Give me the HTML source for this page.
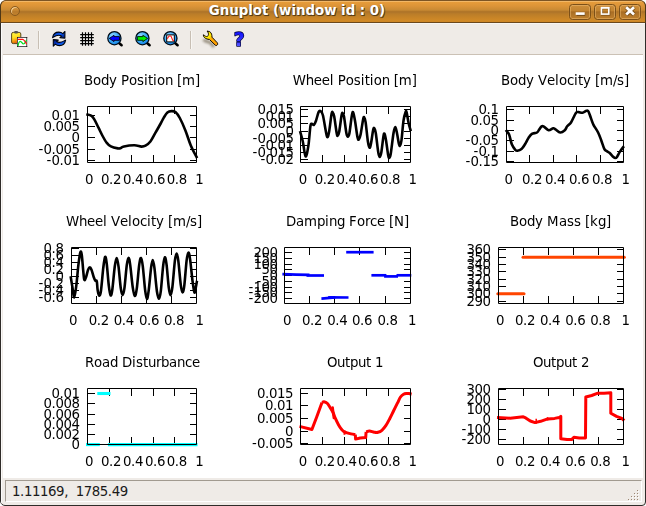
<!DOCTYPE html>
<html><head><meta charset="utf-8"><title>Gnuplot (window id : 0)</title>
<style>
html,body{margin:0;padding:0;background:#fff;}
body{width:646px;height:506px;position:relative;overflow:hidden;font-family:"DejaVu Sans","Liberation Sans",sans-serif;}
#win{position:absolute;left:0;top:0;width:644px;height:504px;background:#efebe7;border:1px solid #2f2c29;border-radius:7px 7px 4px 5px;overflow:hidden;}
#hl{position:absolute;left:0;top:22px;width:644px;height:482px;border-left:1px solid #fbfaf9;border-top:1px solid #f7f5f3;box-sizing:border-box;}
#tb{position:absolute;left:0;top:0;width:646px;height:23px;box-sizing:border-box;border-top:1px solid #7d5524;border-bottom:1px solid #6b481c;border-left:1px solid #4e3716;border-right:1px solid #4e3716;border-radius:6px 6px 0 0;
 background:linear-gradient(to bottom,#f2b766 0px,#f2b766 1px,#e79c3a 1px,#dc9438 5px,#c98a33 9px,#b17629 10.5px,#b17629 11.5px,#bb7d29 13px,#c98527 17px,#d18a27 20px,#cc8424 21px);}
#ttl{position:absolute;left:0;top:2px;width:592px;text-align:center;font-weight:bold;font-size:13.33px;line-height:16px;color:#fff;text-shadow:1px 1px 0 #5a3c14,0 1px 1px #6b481c;white-space:pre;}
.wb{position:absolute;top:3px;width:22px;height:16px;border:1px solid #7c5018;border-radius:3.5px;box-sizing:border-box;
 background:linear-gradient(to bottom,#cd8e3b 0,#c38430 40%,#a86d24 50%,#ad7227 60%,#bf802c 100%);box-shadow:inset 0 0 0 1px rgba(240,190,115,.5), 0 0 0 .5px rgba(240,180,100,.25);}
#circ{position:absolute;left:9px;top:5px;width:8px;height:8px;border-radius:50%;border:1px solid #8a5a1e;box-shadow:inset 1px 1px 0 rgba(255,225,170,.8);background:rgba(200,135,50,.4)}
#plot{position:absolute;left:2px;top:54px;width:640px;height:423px;background:#fff;}
#sb{position:absolute;left:4px;top:479px;width:635px;height:20px;border-top:1px solid #a19a90;border-left:1px solid #a19a90;border-bottom:1px solid #fff;border-right:1px solid #fff;}
#sbt{position:absolute;left:11px;top:483px;font-size:13.33px;line-height:16px;color:#1a1a1a;white-space:pre;letter-spacing:-0.42px;}
.sep{position:absolute;top:30px;width:1px;height:18px;background:#c8bfb4;border-right:1px solid #f8f6f3;}
svg{position:absolute;overflow:visible}
#psvg{will-change:transform}
#psvg text{font-family:"DejaVu Sans","Liberation Sans",sans-serif;font-size:13.33px;fill:#000;}
</style></head><body>
<div id="win">
 <div id="hl"></div>
 <div id="plot"></div>
 <div style="position:absolute;left:2px;top:53px;width:640px;height:1px;background:#cbc1b5"></div>
 <div class="sep" style="left:37px"></div>
 <div class="sep" style="left:189px"></div>
 <div id="sb"></div>
 <div id="sbt">1.11169,  1785.49</div>
 <svg id="icons" width="260" height="32" viewBox="0 24 260 32" style="left:-1px;top:23px;will-change:transform">
<defs>
 <linearGradient id="gclip" x1="0.35" y1="0" x2="0.65" y2="1"><stop offset="0" stop-color="#fff040"/><stop offset=".38" stop-color="#ffe222"/><stop offset=".66" stop-color="#f8a010"/><stop offset="1" stop-color="#d44606"/></linearGradient>
 <linearGradient id="garr" x1="0" y1="0" x2="1" y2="1"><stop offset="0" stop-color="#001a70"/><stop offset=".5" stop-color="#0a5cff"/><stop offset="1" stop-color="#000c58"/></linearGradient>
 <linearGradient id="garr2" x1="0" y1="0" x2="1" y2="1"><stop offset="0" stop-color="#10a8ff"/><stop offset=".45" stop-color="#0a48e8"/><stop offset="1" stop-color="#000c58"/></linearGradient>
 <radialGradient id="glens" cx=".35" cy=".3" r=".8"><stop offset="0" stop-color="#8ed6ff"/><stop offset=".55" stop-color="#38a8f8"/><stop offset="1" stop-color="#0a7ae0"/></radialGradient>
 <linearGradient id="gwr" x1="0" y1="0" x2="1" y2="1"><stop offset="0" stop-color="#f6f000"/><stop offset=".4" stop-color="#ffe800"/><stop offset=".55" stop-color="#ffa800"/><stop offset="1" stop-color="#ff9a00"/></linearGradient>
 <linearGradient id="gq" x1="0" y1="0" x2="0" y2="1"><stop offset="0" stop-color="#0000f8"/><stop offset=".6" stop-color="#3a3aff"/><stop offset="1" stop-color="#7a7aff"/></linearGradient>
 <filter id="blur1" x="-30%" y="-30%" width="160%" height="160%"><feGaussianBlur stdDeviation="0.8"/></filter>
</defs>
<!-- 1: clipboard / copy plot -->
<g>
 <rect x="11.6" y="32.4" width="9.2" height="11.2" rx="1.6" fill="url(#gclip)" stroke="#5c4a1c" stroke-width="1"/>
 <rect x="14.2" y="30.9" width="3.8" height="2.7" rx="1" fill="#555"/>
 <rect x="17.5" y="37.5" width="9.2" height="9" fill="#fff" stroke="#555" stroke-width="1"/>
 <path d="M18 46 C18.4 43.5 19 41.4 20.3 41.3 C21.8 41.3 22 44 23.4 44 C24.8 44 25.6 41.5 26.6 40" fill="none" stroke="#00e020" stroke-width="1.2"/>
 <path d="M17.8 39.4 H22.6 C24.3 39.6 25.5 42 26.6 44.2" fill="none" stroke="#ff1010" stroke-width="1.2"/>
 <rect x="17" y="37" width="1" height="1" fill="#222"/><rect x="26.2" y="37" width="1" height="1" fill="#222"/><rect x="17" y="46" width="1" height="1" fill="#222"/><rect x="26.2" y="46" width="1" height="1" fill="#222"/>
</g>
<!-- 2: replot (refresh arrows) -->
<g transform="translate(52,31)">
 <path d="M0.6 6.6 C1.2 3 3.8 1.1 6.8 1.1 C8.4 1.1 9.8 1.6 10.9 2.6 L12.9 0.5 L12.9 7.1 L7.9 6.6 L9.6 5.2 C8.8 4.6 7.9 4.3 6.8 4.3 C4.4 4.3 2.6 5.4 0.6 6.6 Z" fill="url(#garr)" stroke="#000410" stroke-width="1.1" stroke-linejoin="round"/>
 <path d="M0.6 6.6 C1.2 3 3.8 1.1 6.8 1.1 C8.4 1.1 9.8 1.6 10.9 2.6 L12.9 0.5 L12.9 7.1 L7.9 6.6 L9.6 5.2 C8.8 4.6 7.9 4.3 6.8 4.3 C4.4 4.3 2.6 5.4 0.6 6.6 Z" transform="rotate(180 7.1 7.85)" fill="url(#garr2)" stroke="#000410" stroke-width="1.1" stroke-linejoin="round"/>
</g>
<!-- 3: grid -->
<g>
 <path d="M82.5 32v14M85.5 32v14M88.5 32v14M91.5 32v14M80 34.5h14M80 37.5h14M80 40.5h14M80 43.5h14" stroke="#fff" stroke-width="2.6" opacity=".55" fill="none"/>
 <rect x="83" y="35" width="8" height="8" fill="#fff"/>
 <path d="M82.5 32.2v13.6M85.5 32.2v13.6M88.5 32.2v13.6M91.5 32.2v13.6M80.2 34.5h13.6M80.2 37.5h13.6M80.2 40.5h13.6M80.2 43.5h13.6" stroke="#000" stroke-width="1.25" fill="none"/>
</g>
<!-- 4: zoom previous -->
<g>
 <path d="M119 43 L121.6 45.2" stroke="#000" stroke-width="2.6" stroke-linecap="round"/>
 <circle cx="114.4" cy="38.2" r="6.6" fill="url(#glens)" stroke="#000c18" stroke-width="1.3"/>
 <path d="M109.3 38.4 L114 35.3 V36.6 H119.5 V40.3 H114 V41.6 Z" fill="#0000ff" stroke="#000018" stroke-width=".9" stroke-linejoin="miter"/>
</g>
<!-- 5: zoom next -->
<g>
 <path d="M147 43 L149.6 45.2" stroke="#000" stroke-width="2.6" stroke-linecap="round"/>
 <circle cx="142.4" cy="38.2" r="6.6" fill="url(#glens)" stroke="#000c18" stroke-width="1.3"/>
 <path d="M147.6 38.4 L142.9 35.3 V36.6 H137.4 V40.3 H142.9 V41.6 Z" fill="#00f000" stroke="#001800" stroke-width=".9" stroke-linejoin="miter"/>
</g>
<!-- 6: autoscale -->
<g>
 <path d="M175 43 L177.6 45.2" stroke="#000" stroke-width="2.6" stroke-linecap="round"/>
 <circle cx="170.4" cy="38.2" r="6.6" fill="url(#glens)" stroke="#000c18" stroke-width="1.3"/>
 <rect x="166.7" y="34.9" width="7.6" height="7" fill="#fff" stroke="#000" stroke-width="1"/>
 <path d="M167.3 38.6 C168.2 38 168.4 36.1 169.5 36 H170.6 C171.8 36.2 172 40 173 40.5 L173.9 40.8" fill="none" stroke="#ff1010" stroke-width="1.1"/>
</g>
<!-- 7: wrench -->
<g>
 <path d="M203.5 39.5 C205 41.5 208 42 210 42.4 L214 47" stroke="#7a705c" stroke-width="3" fill="none" opacity=".7" filter="url(#blur1)"/>
 <path d="M203.3 34.8 C203.3 36.6 204.6 38.3 207 39 L209.6 39.6 L215.3 45.2 C216.3 46 217.8 45.2 217.7 43.8 L217.3 42.8 L212 37.2 C212 35.2 211.6 32.8 209.8 31.7 L207 31 C208.4 32.3 208.8 34 208.2 35.6 C207.4 36.9 205.6 36.8 204.3 35.3 Z" fill="url(#gwr)" stroke="#140c00" stroke-width="1" stroke-linejoin="round"/>
</g>
<!-- 8: help -->
<g>
 <text x="239.1" y="46.2" text-anchor="middle" font-family="DejaVu Sans, Liberation Sans, sans-serif" font-weight="bold" font-size="19.6" fill="url(#gq)" stroke="#000040" stroke-width="1.5" stroke-linejoin="round" paint-order="stroke" transform="translate(239.1 0) scale(.96 1) translate(-239.1 0)">?</text>
</g>
</svg>

</div>
<div id="tb">
  <div id="circ"></div>
  <div id="ttl">Gnuplot (window id : 0)</div>
  <div class="wb" style="left:568px"></div>
  <div class="wb" style="left:593px"></div>
  <div class="wb" style="left:618px"></div>
  <svg width="646" height="23" viewBox="0 0 646 23" style="left:-1px;top:-1px">
   <g fill="none" stroke="#4a3010" opacity=".55"><path d="M576.6 14.6h8.6" stroke-width="2.8"/><rect x="602.1" y="8.4" width="7.3" height="6.3" stroke-width="1.8"/><path d="M626.2 7.2l7.8 7.4M634 7.2l-7.8 7.4" stroke-width="4.6"/></g>
   <g fill="none" stroke="#fff"><path d="M575.7 13.6h9" stroke-width="2.6"/><rect x="601.5" y="7.9" width="7.3" height="6.2" stroke-width="1.6"/><path d="M601 7.6h8.3" stroke-width="1.4"/><path d="M626.2 7.2l7.8 7.4M634 7.2l-7.8 7.4" stroke-width="2.7"/></g>
  </svg>
 </div>
<svg id="psvg" width="646" height="506" viewBox="0 0 646 506" style="left:0;top:0">
<g><rect x="638" y="491" width="1" height="1" fill="#fff"/><rect x="635" y="494" width="1" height="1" fill="#fff"/><rect x="638" y="494" width="1" height="1" fill="#fff"/><rect x="632" y="497" width="1" height="1" fill="#fff"/><rect x="635" y="497" width="1" height="1" fill="#fff"/><rect x="638" y="497" width="1" height="1" fill="#fff"/><rect x="629" y="500" width="1" height="1" fill="#fff"/><rect x="632" y="500" width="1" height="1" fill="#fff"/><rect x="635" y="500" width="1" height="1" fill="#fff"/><rect x="638" y="500" width="1" height="1" fill="#fff"/><rect x="637" y="490" width="1" height="1" fill="#9c8672"/><rect x="634" y="493" width="1" height="1" fill="#9c8672"/><rect x="637" y="493" width="1" height="1" fill="#9c8672"/><rect x="631" y="496" width="1" height="1" fill="#9c8672"/><rect x="634" y="496" width="1" height="1" fill="#9c8672"/><rect x="637" y="496" width="1" height="1" fill="#9c8672"/><rect x="628" y="499" width="1" height="1" fill="#9c8672"/><rect x="631" y="499" width="1" height="1" fill="#9c8672"/><rect x="634" y="499" width="1" height="1" fill="#9c8672"/><rect x="637" y="499" width="1" height="1" fill="#9c8672"/></g>
<path d="M109.50 162.50 V155.00 M109.50 106.50 V114.00M131.50 162.50 V155.00 M131.50 106.50 V114.00M153.50 162.50 V155.00 M153.50 106.50 V114.00M174.50 162.50 V155.00 M174.50 106.50 V114.00M87.50 115.50 H95.00 M196.50 115.50 H190.00M87.50 126.50 H95.00 M196.50 126.50 H190.00M87.50 137.50 H95.00 M196.50 137.50 H190.00M87.50 149.50 H95.00 M196.50 149.50 H190.00M87.50 160.50 H95.00 M196.50 160.50 H190.00" fill="none" stroke="#000" stroke-width="1"/>
<path d="M86.30 114.30C87.17 114.57 90.17 115.05 91.50 115.90C92.83 116.75 93.13 117.43 94.30 119.40C95.47 121.37 97.12 124.93 98.50 127.70C99.88 130.47 101.22 133.47 102.60 136.00C103.98 138.53 105.42 141.17 106.80 142.90C108.18 144.63 109.07 145.48 110.90 146.40C112.73 147.32 116.18 148.10 117.80 148.40C119.42 148.70 119.57 148.53 120.60 148.20C121.63 147.87 121.70 146.88 124.00 146.40C126.30 145.92 131.50 145.27 134.40 145.30C137.30 145.33 139.55 146.53 141.40 146.60C143.25 146.67 144.00 146.55 145.50 145.70C147.00 144.85 148.78 143.58 150.40 141.50C152.02 139.42 153.48 136.20 155.20 133.20C156.92 130.20 159.27 126.10 160.70 123.50C162.13 120.90 162.68 119.43 163.80 117.60C164.92 115.77 166.12 113.58 167.40 112.50C168.68 111.42 170.12 111.15 171.50 111.10C172.88 111.05 174.32 111.05 175.70 112.20C177.08 113.35 178.18 114.97 179.80 118.00C181.42 121.03 183.55 125.78 185.40 130.40C187.25 135.02 188.95 141.08 190.90 145.70C192.85 150.32 196.07 156.03 197.10 158.10" fill="none" stroke="#000" stroke-width="2.60" stroke-linecap="butt" stroke-linejoin="round"/>
<path d="M87.50 106.50 H196.50 V162.50 H87.50 Z" fill="none" stroke="#000" stroke-width="1"/>
<text x="51.50 59.50 63.50 71.50" y="120.10">0.01</text>
<text x="43.50 51.50 55.50 63.50 71.50" y="131.10">0.005</text>
<text x="71.50" y="142.10">0</text>
<text x="38.50 43.50 51.50 55.50 63.50 71.50" y="154.10">-0.005</text>
<text x="46.50 51.50 59.50 63.50 71.50" y="165.10">-0.01</text>
<text x="85.10" y="183.50">0</text>
<text x="101.10 109.10 113.10" y="183.50">0.2</text>
<text x="123.10 131.10 135.10" y="183.50">0.4</text>
<text x="145.10 153.10 157.10" y="183.50">0.6</text>
<text x="166.70 174.70 178.70" y="183.50">0.8</text>
<text x="195.30" y="183.50">1</text>
<text x="84.00 93.00 101.00 109.00 117.00 121.00 129.00 137.00 144.00 148.00 153.00 157.00 165.00 173.00 177.00 182.00 195.00" y="85.00">Body Position [m]</text>
<path d="M322.50 162.50 V155.00 M322.50 106.50 V114.00M344.50 162.50 V155.00 M344.50 106.50 V114.00M366.50 162.50 V155.00 M366.50 106.50 V114.00M388.50 162.50 V155.00 M388.50 106.50 V114.00M300.50 109.50 H308.00 M410.50 109.50 H404.00M300.50 116.50 H308.00 M410.50 116.50 H404.00M300.50 123.50 H308.00 M410.50 123.50 H404.00M300.50 131.50 H308.00 M410.50 131.50 H404.00M300.50 138.50 H308.00 M410.50 138.50 H404.00M300.50 145.50 H308.00 M410.50 145.50 H404.00M300.50 152.50 H308.00 M410.50 152.50 H404.00M300.50 159.50 H308.00 M410.50 159.50 H404.00" fill="none" stroke="#000" stroke-width="1"/>
<path d="M300.00 131.10C300.47 132.83 301.87 137.28 302.80 141.50C303.73 145.72 304.67 155.72 305.60 156.40C306.53 157.08 307.60 150.62 308.40 145.60C309.20 140.58 309.83 129.93 310.40 126.30C310.97 122.67 311.22 124.03 311.80 123.80C312.38 123.57 313.20 125.42 313.90 124.90C314.60 124.38 315.20 122.88 316.00 120.70C316.80 118.52 317.90 113.37 318.70 111.80C319.50 110.23 320.10 110.73 320.80 111.30C321.50 111.87 322.08 112.02 322.90 115.20C323.72 118.38 324.97 126.75 325.70 130.40C326.43 134.05 326.73 136.87 327.30 137.10C327.87 137.33 328.38 135.68 329.10 131.80C329.82 127.92 330.98 116.98 331.60 113.80C332.22 110.62 332.37 112.23 332.80 112.70C333.23 113.17 333.55 113.18 334.20 116.60C334.85 120.02 336.10 130.02 336.70 133.20C337.30 136.38 337.38 135.93 337.80 135.70C338.22 135.47 338.57 135.22 339.20 131.80C339.83 128.38 341.02 118.32 341.60 115.20C342.18 112.08 342.30 112.87 342.70 113.10C343.10 113.33 343.38 113.25 344.00 116.60C344.62 119.95 345.77 129.87 346.40 133.20C347.03 136.53 347.30 136.60 347.80 136.60C348.30 136.60 348.72 136.77 349.40 133.20C350.08 129.63 351.25 118.62 351.90 115.20C352.55 111.78 352.75 111.57 353.30 112.70C353.85 113.83 354.50 117.90 355.20 122.00C355.90 126.10 356.88 134.40 357.50 137.30C358.12 140.20 358.38 139.85 358.90 139.40C359.42 138.95 359.90 137.93 360.60 134.60C361.30 131.27 362.50 122.28 363.10 119.40C363.70 116.52 363.78 116.85 364.20 117.30C364.62 117.75 364.98 118.07 365.60 122.10C366.22 126.13 367.23 137.23 367.90 141.50C368.57 145.77 369.07 147.47 369.60 147.70C370.13 147.93 370.50 145.90 371.10 142.90C371.70 139.90 372.65 132.12 373.20 129.70C373.75 127.28 373.97 127.82 374.40 128.40C374.83 128.98 375.15 129.17 375.80 133.20C376.45 137.23 377.65 148.63 378.30 152.60C378.95 156.57 379.20 157.00 379.70 157.00C380.20 157.00 380.67 156.10 381.30 152.60C381.93 149.10 382.95 139.12 383.50 136.00C384.05 132.88 384.18 133.22 384.60 133.90C385.02 134.58 385.40 136.53 386.00 140.10C386.60 143.67 387.65 152.35 388.20 155.30C388.75 158.25 388.88 158.02 389.30 157.80C389.72 157.58 390.00 158.10 390.70 154.00C391.40 149.90 392.73 137.70 393.50 133.20C394.27 128.70 394.72 127.00 395.30 127.00C395.88 127.00 396.38 130.32 397.00 133.20C397.62 136.08 398.48 142.27 399.00 144.30C399.52 146.33 399.68 146.10 400.10 145.40C400.52 144.70 400.93 144.22 401.50 140.10C402.07 135.98 402.80 125.42 403.50 120.70C404.20 115.98 405.18 113.18 405.70 111.80C406.22 110.42 406.10 110.45 406.60 112.40C407.10 114.35 408.00 120.38 408.70 123.50C409.40 126.62 410.45 129.83 410.80 131.10" fill="none" stroke="#000" stroke-width="2.60" stroke-linecap="butt" stroke-linejoin="round"/>
<path d="M300.50 106.50 H410.50 V162.50 H300.50 Z" fill="none" stroke="#000" stroke-width="1"/>
<text x="257.50 265.50 269.50 277.50 285.50" y="114.10">0.015</text>
<text x="265.50 273.50 277.50 285.50" y="121.10">0.01</text>
<text x="257.50 265.50 269.50 277.50 285.50" y="128.10">0.005</text>
<text x="285.50" y="136.10">0</text>
<text x="252.50 257.50 265.50 269.50 277.50 285.50" y="143.10">-0.005</text>
<text x="260.50 265.50 273.50 277.50 285.50" y="150.10">-0.01</text>
<text x="252.50 257.50 265.50 269.50 277.50 285.50" y="157.10">-0.015</text>
<text x="260.50 265.50 273.50 277.50 285.50" y="164.10">-0.02</text>
<text x="298.70" y="183.50">0</text>
<text x="314.70 322.70 326.70" y="183.50">0.2</text>
<text x="336.50 344.50 348.50" y="183.50">0.4</text>
<text x="358.10 366.10 370.10" y="183.50">0.6</text>
<text x="380.10 388.10 392.10" y="183.50">0.8</text>
<text x="408.50" y="183.50">1</text>
<text x="292.80 305.80 313.80 321.80 329.80 333.80 337.80 345.80 353.80 360.80 364.80 369.80 373.80 381.80 389.80 393.80 398.80 411.80" y="85.00">Wheel Position [m]</text>
<path d="M529.50 162.50 V155.00 M529.50 106.50 V114.00M553.50 162.50 V155.00 M553.50 106.50 V114.00M576.50 162.50 V155.00 M576.50 106.50 V114.00M600.50 162.50 V155.00 M600.50 106.50 V114.00M506.50 109.50 H514.00 M623.50 109.50 H617.00M506.50 120.50 H514.00 M623.50 120.50 H617.00M506.50 130.50 H514.00 M623.50 130.50 H617.00M506.50 140.50 H514.00 M623.50 140.50 H617.00M506.50 151.50 H514.00 M623.50 151.50 H617.00M506.50 161.50 H514.00 M623.50 161.50 H617.00" fill="none" stroke="#000" stroke-width="1"/>
<path d="M505.80 130.00C506.35 130.77 508.10 132.22 509.10 134.60C510.10 136.98 510.77 141.77 511.80 144.30C512.83 146.83 514.37 148.72 515.30 149.80C516.23 150.88 516.37 150.92 517.40 150.80C518.43 150.68 520.23 150.18 521.50 149.10C522.77 148.02 523.85 146.13 525.00 144.30C526.15 142.47 527.25 139.83 528.40 138.10C529.55 136.37 530.47 134.83 531.90 133.90C533.33 132.97 535.77 133.25 537.00 132.50C538.23 131.75 538.53 130.43 539.30 129.40C540.07 128.37 540.83 126.77 541.60 126.30C542.37 125.83 542.73 125.95 543.90 126.60C545.07 127.25 547.05 129.92 548.60 130.20C550.15 130.48 552.05 128.43 553.20 128.30C554.35 128.17 554.33 128.70 555.50 129.40C556.67 130.10 558.65 132.37 560.20 132.50C561.75 132.63 563.63 131.23 564.80 130.20C565.97 129.17 566.17 127.60 567.20 126.30C568.23 125.00 569.85 124.07 571.00 122.40C572.15 120.73 573.20 117.97 574.10 116.30C575.00 114.63 575.62 113.10 576.40 112.40C577.18 111.70 577.77 112.05 578.80 112.10C579.83 112.15 581.32 112.92 582.60 112.70C583.88 112.48 585.52 110.98 586.50 110.80C587.48 110.62 587.73 110.30 588.50 111.60C589.27 112.90 590.27 116.40 591.10 118.60C591.93 120.80 592.33 122.48 593.50 124.80C594.67 127.12 596.82 129.93 598.10 132.50C599.38 135.07 600.17 137.48 601.20 140.20C602.23 142.92 603.40 146.98 604.30 148.80C605.20 150.62 605.70 150.38 606.60 151.10C607.50 151.82 608.67 152.20 609.70 153.10C610.73 154.00 611.90 155.68 612.80 156.50C613.70 157.32 614.40 157.92 615.10 158.00C615.80 158.08 616.22 158.02 617.00 157.00C617.78 155.98 618.65 153.70 619.80 151.90C620.95 150.10 623.22 147.15 623.90 146.20" fill="none" stroke="#000" stroke-width="2.60" stroke-linecap="butt" stroke-linejoin="round"/>
<path d="M506.50 106.50 H623.50 V162.50 H506.50 Z" fill="none" stroke="#000" stroke-width="1"/>
<text x="478.50 486.50 490.50" y="114.10">0.1</text>
<text x="470.50 478.50 482.50 490.50" y="125.10">0.05</text>
<text x="490.50" y="135.10">0</text>
<text x="465.50 470.50 478.50 482.50 490.50" y="145.10">-0.05</text>
<text x="473.50 478.50 486.50 490.50" y="156.10">-0.1</text>
<text x="465.50 470.50 478.50 482.50 490.50" y="166.10">-0.15</text>
<text x="504.50" y="183.50">0</text>
<text x="522.10 530.10 534.10" y="183.50">0.2</text>
<text x="545.10 553.10 557.10" y="183.50">0.4</text>
<text x="568.90 576.90 580.90" y="183.50">0.6</text>
<text x="592.10 600.10 604.10" y="183.50">0.8</text>
<text x="621.50" y="183.50">1</text>
<text x="501.00 510.00 518.00 526.00 534.00 538.00 547.00 555.00 559.00 567.00 574.00 578.00 583.00 591.00 595.00 600.00 613.00 617.00 624.00" y="85.00">Body Velocity [m/s]</text>
<path d="M96.50 303.50 V296.00 M96.50 247.50 V255.00M121.50 303.50 V296.00 M121.50 247.50 V255.00M146.50 303.50 V296.00 M146.50 247.50 V255.00M171.50 303.50 V296.00 M171.50 247.50 V255.00M71.50 248.50 H79.00 M196.50 248.50 H190.00M71.50 255.50 H79.00 M196.50 255.50 H190.00M71.50 262.50 H79.00 M196.50 262.50 H190.00M71.50 269.50 H79.00 M196.50 269.50 H190.00M71.50 276.50 H79.00 M196.50 276.50 H190.00M71.50 283.50 H79.00 M196.50 283.50 H190.00M71.50 290.50 H79.00 M196.50 290.50 H190.00M71.50 297.50 H79.00 M196.50 297.50 H190.00" fill="none" stroke="#000" stroke-width="1"/>
<path d="M70.60 276.20C70.90 278.00 71.80 283.47 72.40 287.00C73.00 290.53 73.55 297.63 74.20 297.40C74.85 297.17 75.60 291.02 76.30 285.60C77.00 280.18 77.72 270.47 78.40 264.90C79.08 259.33 79.83 253.82 80.40 252.20C80.97 250.58 81.33 252.17 81.80 255.20C82.27 258.23 82.78 266.30 83.20 270.40C83.62 274.50 83.83 278.65 84.30 279.80C84.77 280.95 85.37 278.98 86.00 277.30C86.63 275.62 87.45 271.35 88.10 269.70C88.75 268.05 89.33 267.40 89.90 267.40C90.47 267.40 90.88 268.15 91.50 269.70C92.12 271.25 92.95 274.85 93.60 276.70C94.25 278.55 94.87 280.05 95.40 280.80C95.93 281.55 96.43 279.70 96.80 281.20C97.17 282.70 97.22 287.40 97.60 289.80C97.98 292.20 98.55 295.37 99.10 295.60C99.65 295.83 100.20 295.85 100.90 291.20C101.60 286.55 102.60 273.42 103.30 267.70C104.00 261.98 104.53 257.60 105.10 256.90C105.67 256.20 106.08 258.72 106.70 263.50C107.32 268.28 108.15 280.30 108.80 285.60C109.45 290.90 110.02 294.60 110.60 295.30C111.18 296.00 111.60 294.63 112.30 289.80C113.00 284.97 114.07 271.60 114.80 266.30C115.53 261.00 116.08 258.00 116.70 258.00C117.32 258.00 117.82 261.23 118.50 266.30C119.18 271.37 120.12 283.60 120.80 288.40C121.48 293.20 122.00 295.10 122.60 295.10C123.20 295.10 123.70 293.43 124.40 288.40C125.10 283.37 126.10 270.02 126.80 264.90C127.50 259.78 128.03 257.70 128.60 257.70C129.17 257.70 129.52 260.02 130.20 264.90C130.88 269.78 131.93 281.82 132.70 287.00C133.47 292.18 134.12 295.77 134.80 296.00C135.48 296.23 136.07 293.58 136.80 288.40C137.53 283.22 138.50 269.97 139.20 264.90C139.90 259.83 140.40 257.77 141.00 258.00C141.60 258.23 142.12 261.00 142.80 266.30C143.48 271.60 144.42 284.38 145.10 289.80C145.78 295.22 146.32 298.57 146.90 298.80C147.48 299.03 147.90 296.38 148.60 291.20C149.30 286.02 150.42 272.88 151.10 267.70C151.78 262.52 152.15 260.10 152.70 260.10C153.25 260.10 153.70 262.52 154.40 267.70C155.10 272.88 156.13 286.02 156.90 291.20C157.67 296.38 158.35 298.80 159.00 298.80C159.65 298.80 160.12 296.62 160.80 291.20C161.48 285.78 162.42 271.95 163.10 266.30C163.78 260.65 164.32 257.53 164.90 257.30C165.48 257.07 165.97 259.95 166.60 264.90C167.23 269.85 168.05 281.93 168.70 287.00C169.35 292.07 169.88 295.30 170.50 295.30C171.12 295.30 171.67 292.77 172.40 287.00C173.13 281.23 174.18 266.27 174.90 260.70C175.62 255.13 176.13 253.60 176.70 253.60C177.27 253.60 177.63 255.58 178.30 260.70C178.97 265.82 180.00 279.03 180.70 284.30C181.40 289.57 181.90 292.08 182.50 292.30C183.10 292.52 183.62 290.87 184.30 285.60C184.98 280.33 185.92 266.18 186.60 260.70C187.28 255.22 187.82 252.92 188.40 252.70C188.98 252.48 189.40 254.60 190.10 259.40C190.80 264.20 191.87 275.97 192.60 281.50C193.33 287.03 193.95 291.68 194.50 292.60C195.05 293.52 195.48 288.97 195.90 287.00C196.32 285.03 196.82 281.83 197.00 280.80" fill="none" stroke="#000" stroke-width="2.60" stroke-linecap="butt" stroke-linejoin="round"/>
<path d="M71.50 247.50 H196.50 V303.50 H71.50 Z" fill="none" stroke="#000" stroke-width="1"/>
<text x="43.50 51.50 55.50" y="253.10">0.8</text>
<text x="43.50 51.50 55.50" y="260.10">0.6</text>
<text x="43.50 51.50 55.50" y="267.10">0.4</text>
<text x="43.50 51.50 55.50" y="274.10">0.2</text>
<text x="55.50" y="281.10">0</text>
<text x="38.50 43.50 51.50 55.50" y="288.10">-0.2</text>
<text x="38.50 43.50 51.50 55.50" y="295.10">-0.4</text>
<text x="38.50 43.50 51.50 55.50" y="302.10">-0.6</text>
<text x="69.10" y="324.50">0</text>
<text x="88.80 96.80 100.80" y="324.50">0.2</text>
<text x="113.80 121.80 125.80" y="324.50">0.4</text>
<text x="139.00 147.00 151.00" y="324.50">0.6</text>
<text x="164.00 172.00 176.00" y="324.50">0.8</text>
<text x="195.40" y="324.50">1</text>
<text x="66.00 79.00 87.00 95.00 103.00 107.00 111.00 120.00 128.00 132.00 140.00 147.00 151.00 156.00 164.00 168.00 173.00 186.00 190.00 197.00" y="226.00">Wheel Velocity [m/s]</text>
<path d="M309.50 303.50 V296.00 M309.50 247.50 V255.00M334.50 303.50 V296.00 M334.50 247.50 V255.00M359.50 303.50 V296.00 M359.50 247.50 V255.00M385.50 303.50 V296.00 M385.50 247.50 V255.00M284.50 252.50 H292.00 M410.50 252.50 H404.00M284.50 258.50 H292.00 M410.50 258.50 H404.00M284.50 264.50 H292.00 M410.50 264.50 H404.00M284.50 269.50 H292.00 M410.50 269.50 H404.00M284.50 275.50 H292.00 M410.50 275.50 H404.00M284.50 281.50 H292.00 M410.50 281.50 H404.00M284.50 287.50 H292.00 M410.50 287.50 H404.00M284.50 292.50 H292.00 M410.50 292.50 H404.00M284.50 298.50 H292.00 M410.50 298.50 H404.00" fill="none" stroke="#000" stroke-width="1"/>
<path d="M282.40 274.20L296.00 274.60L309.50 274.90" fill="none" stroke="#0000ff" stroke-width="2.70" stroke-linecap="butt" stroke-linejoin="round"/>
<path d="M306.50 275.50L324.00 275.50" fill="none" stroke="#0000ff" stroke-width="2.70" stroke-linecap="butt" stroke-linejoin="round"/>
<path d="M321.40 298.60L335.20 297.40" fill="none" stroke="#0000ff" stroke-width="2.70" stroke-linecap="butt" stroke-linejoin="round"/>
<path d="M328.20 297.40L348.50 297.50" fill="none" stroke="#0000ff" stroke-width="2.70" stroke-linecap="butt" stroke-linejoin="round"/>
<path d="M346.20 252.20L373.60 252.20" fill="none" stroke="#0000ff" stroke-width="2.70" stroke-linecap="butt" stroke-linejoin="round"/>
<path d="M371.40 275.30L386.40 275.30" fill="none" stroke="#0000ff" stroke-width="2.70" stroke-linecap="butt" stroke-linejoin="round"/>
<path d="M384.10 276.40L398.00 276.40" fill="none" stroke="#0000ff" stroke-width="2.70" stroke-linecap="butt" stroke-linejoin="round"/>
<path d="M396.50 275.30L411.30 275.30" fill="none" stroke="#0000ff" stroke-width="2.70" stroke-linecap="butt" stroke-linejoin="round"/>
<path d="M284.50 247.50 H410.50 V303.50 H284.50 Z" fill="none" stroke="#000" stroke-width="1"/>
<text x="253.50 261.50 269.50" y="257.10">200</text>
<text x="253.50 261.50 269.50" y="263.10">150</text>
<text x="253.50 261.50 269.50" y="269.10">100</text>
<text x="261.50 269.50" y="274.10">50</text>
<text x="269.50" y="280.10">0</text>
<text x="256.50 261.50 269.50" y="286.10">-50</text>
<text x="248.50 253.50 261.50 269.50" y="292.10">-100</text>
<text x="248.50 253.50 261.50 269.50" y="297.10">-150</text>
<text x="248.50 253.50 261.50 269.50" y="303.10">-200</text>
<text x="283.10" y="324.50">0</text>
<text x="302.10 310.10 314.10" y="324.50">0.2</text>
<text x="327.30 335.30 339.30" y="324.50">0.4</text>
<text x="352.10 360.10 364.10" y="324.50">0.6</text>
<text x="377.50 385.50 389.50" y="324.50">0.8</text>
<text x="408.10" y="324.50">1</text>
<text x="286.00 296.00 304.00 317.00 325.00 329.00 337.00 345.00 349.00 357.00 365.00 370.00 377.00 385.00 389.00 394.00 404.00" y="226.00">Damping Force [N]</text>
<path d="M523.50 303.50 V296.00 M523.50 247.50 V255.00M548.50 303.50 V296.00 M548.50 247.50 V255.00M573.50 303.50 V296.00 M573.50 247.50 V255.00M598.50 303.50 V296.00 M598.50 247.50 V255.00M498.50 249.50 H506.00 M623.50 249.50 H617.00M498.50 257.50 H506.00 M623.50 257.50 H617.00M498.50 264.50 H506.00 M623.50 264.50 H617.00M498.50 271.50 H506.00 M623.50 271.50 H617.00M498.50 279.50 H506.00 M623.50 279.50 H617.00M498.50 286.50 H506.00 M623.50 286.50 H617.00M498.50 293.50 H506.00 M623.50 293.50 H617.00M498.50 301.50 H506.00 M623.50 301.50 H617.00" fill="none" stroke="#000" stroke-width="1"/>
<path d="M497.80 293.70L524.00 293.70" fill="none" stroke="#ff4500" stroke-width="3.00" stroke-linecap="round" stroke-linejoin="round"/>
<path d="M523.00 257.30L624.30 257.30" fill="none" stroke="#ff4500" stroke-width="3.00" stroke-linecap="round" stroke-linejoin="round"/>
<path d="M498.50 247.50 H623.50 V303.50 H498.50 Z" fill="none" stroke="#000" stroke-width="1"/>
<text x="466.50 474.50 482.50" y="254.10">360</text>
<text x="466.50 474.50 482.50" y="262.10">350</text>
<text x="466.50 474.50 482.50" y="269.10">340</text>
<text x="466.50 474.50 482.50" y="276.10">330</text>
<text x="466.50 474.50 482.50" y="284.10">320</text>
<text x="466.50 474.50 482.50" y="291.10">310</text>
<text x="466.50 474.50 482.50" y="298.10">300</text>
<text x="466.50 474.50 482.50" y="306.10">290</text>
<text x="496.10" y="324.50">0</text>
<text x="515.10 523.10 527.10" y="324.50">0.2</text>
<text x="540.10 548.10 552.10" y="324.50">0.4</text>
<text x="565.30 573.30 577.30" y="324.50">0.6</text>
<text x="590.30 598.30 602.30" y="324.50">0.8</text>
<text x="621.60" y="324.50">1</text>
<text x="510.00 519.00 527.00 535.00 543.00 547.00 559.00 567.00 574.00 581.00 585.00 590.00 598.00 606.00" y="226.00">Body Mass [kg]</text>
<path d="M109.50 444.50 V437.00 M109.50 388.50 V396.00M131.50 444.50 V437.00 M131.50 388.50 V396.00M153.50 444.50 V437.00 M153.50 388.50 V396.00M174.50 444.50 V437.00 M174.50 388.50 V396.00M87.50 393.50 H95.00 M196.50 393.50 H190.00M87.50 403.50 H95.00 M196.50 403.50 H190.00M87.50 414.50 H95.00 M196.50 414.50 H190.00M87.50 424.50 H95.00 M196.50 424.50 H190.00M87.50 434.50 H95.00 M196.50 434.50 H190.00M87.50 444.50 H95.00 M196.50 444.50 H190.00" fill="none" stroke="#000" stroke-width="1"/>
<path d="M97.30 393.50L110.50 393.50" fill="none" stroke="#00ffff" stroke-width="3.10" stroke-linecap="butt" stroke-linejoin="round"/>
<path d="M86.00 444.60L99.80 444.60" fill="none" stroke="#00ffff" stroke-width="3.10" stroke-linecap="butt" stroke-linejoin="round"/>
<path d="M107.90 444.60L197.50 444.60" fill="none" stroke="#00ffff" stroke-width="3.10" stroke-linecap="butt" stroke-linejoin="round"/>
<path d="M87.50 388.50 H196.50 V444.50 H87.50 Z" fill="none" stroke="#000" stroke-width="1"/>
<text x="51.50 59.50 63.50 71.50" y="398.10">0.01</text>
<text x="43.50 51.50 55.50 63.50 71.50" y="408.10">0.008</text>
<text x="43.50 51.50 55.50 63.50 71.50" y="419.10">0.006</text>
<text x="43.50 51.50 55.50 63.50 71.50" y="429.10">0.004</text>
<text x="43.50 51.50 55.50 63.50 71.50" y="439.10">0.002</text>
<text x="71.50" y="449.10">0</text>
<text x="85.10" y="465.50">0</text>
<text x="101.10 109.10 113.10" y="465.50">0.2</text>
<text x="123.10 131.10 135.10" y="465.50">0.4</text>
<text x="145.10 153.10 157.10" y="465.50">0.6</text>
<text x="166.70 174.70 178.70" y="465.50">0.8</text>
<text x="195.30" y="465.50">1</text>
<text x="85.00 94.00 102.00 110.00 118.00 122.00 132.00 136.00 143.00 148.00 156.00 161.00 169.00 177.00 185.00 192.00" y="367.00">Road Disturbance</text>
<path d="M322.50 444.50 V437.00 M322.50 388.50 V396.00M344.50 444.50 V437.00 M344.50 388.50 V396.00M366.50 444.50 V437.00 M366.50 388.50 V396.00M388.50 444.50 V437.00 M388.50 388.50 V396.00M300.50 393.50 H308.00 M410.50 393.50 H404.00M300.50 405.50 H308.00 M410.50 405.50 H404.00M300.50 418.50 H308.00 M410.50 418.50 H404.00M300.50 431.50 H308.00 M410.50 431.50 H404.00M300.50 443.50 H308.00 M410.50 443.50 H404.00" fill="none" stroke="#000" stroke-width="1"/>
<path d="M299.50 426.40L311.90 429.50L316.60 417.20L322.00 402.40" fill="none" stroke="#ff0000" stroke-width="3.00" stroke-linecap="butt" stroke-linejoin="round"/>
<path d="M322.00 402.40C322.33 402.28 323.13 401.57 324.00 401.70C324.87 401.83 326.15 402.17 327.20 403.20C328.25 404.23 329.33 406.35 330.30 407.90C331.27 409.45 332.13 410.70 333.00 412.50C333.87 414.30 334.57 416.63 335.50 418.70C336.43 420.77 337.57 423.10 338.60 424.90C339.63 426.70 340.72 428.33 341.70 429.50C342.68 430.67 342.95 431.17 344.50 431.90C346.05 432.63 349.20 433.47 351.00 433.90C352.80 434.33 354.58 434.40 355.30 434.50" fill="none" stroke="#ff0000" stroke-width="3.00" stroke-linecap="butt" stroke-linejoin="round"/>
<path d="M355.30 434.50L355.60 439.10L360.20 438.00L365.70 437.60L366.10 431.90" fill="none" stroke="#ff0000" stroke-width="3.00" stroke-linecap="butt" stroke-linejoin="round"/>
<path d="M366.10 431.90C366.67 431.77 368.15 431.05 369.50 431.10C370.85 431.15 372.78 432.00 374.20 432.20C375.62 432.40 376.72 432.62 378.00 432.30C379.28 431.98 380.60 431.40 381.90 430.30C383.20 429.20 384.50 427.63 385.80 425.70C387.10 423.77 388.42 421.15 389.70 418.70C390.98 416.25 392.22 413.58 393.50 411.00C394.78 408.42 396.23 405.53 397.40 403.20C398.57 400.87 399.47 398.50 400.50 397.00C401.53 395.50 402.57 394.78 403.60 394.20C404.63 393.62 405.80 393.60 406.70 393.50C407.60 393.40 408.18 393.48 409.00 393.60C409.82 393.72 411.17 394.10 411.60 394.20" fill="none" stroke="#ff0000" stroke-width="3.00" stroke-linecap="butt" stroke-linejoin="round"/>
<path d="M332.60 407.50L333.90 418.00" fill="none" stroke="#ff0000" stroke-width="2.60" stroke-linecap="round" stroke-linejoin="round"/>
<path d="M344.50 430.50L344.50 434.80" fill="none" stroke="#ff0000" stroke-width="2.00" stroke-linecap="butt" stroke-linejoin="round"/>
<path d="M300.50 388.50 H410.50 V444.50 H300.50 Z" fill="none" stroke="#000" stroke-width="1"/>
<text x="257.10 265.10 269.10 277.10 285.10" y="398.10">0.015</text>
<text x="265.10 273.10 277.10 285.10" y="410.10">0.01</text>
<text x="257.10 265.10 269.10 277.10 285.10" y="423.10">0.005</text>
<text x="285.10" y="436.10">0</text>
<text x="252.10 257.10 265.10 269.10 277.10 285.10" y="448.10">-0.005</text>
<text x="298.70" y="465.50">0</text>
<text x="314.70 322.70 326.70" y="465.50">0.2</text>
<text x="336.50 344.50 348.50" y="465.50">0.4</text>
<text x="358.10 366.10 370.10" y="465.50">0.6</text>
<text x="380.10 388.10 392.10" y="465.50">0.8</text>
<text x="408.50" y="465.50">1</text>
<text x="327.10 337.10 345.10 350.10 358.10 366.10 371.10 375.10" y="367.00">Output 1</text>
<path d="M523.50 444.50 V437.00 M523.50 388.50 V396.00M548.50 444.50 V437.00 M548.50 388.50 V396.00M573.50 444.50 V437.00 M573.50 388.50 V396.00M598.50 444.50 V437.00 M598.50 388.50 V396.00M498.50 389.50 H506.00 M623.50 389.50 H617.00M498.50 399.50 H506.00 M623.50 399.50 H617.00M498.50 409.50 H506.00 M623.50 409.50 H617.00M498.50 419.50 H506.00 M623.50 419.50 H617.00M498.50 429.50 H506.00 M623.50 429.50 H617.00M498.50 439.50 H506.00 M623.50 439.50 H617.00" fill="none" stroke="#000" stroke-width="1"/>
<path d="M497.00 417.60L510.20 418.20L523.30 416.80L525.70 417.90L530.30 421.00L535.00 422.60L540.60 421.30L547.60 418.90L554.60 418.40L559.20 417.50L560.80 416.40L560.80 438.80L567.00 439.60L571.60 439.60L573.90 437.30L579.30 438.00L585.50 438.00L585.80 397.00L591.70 395.50L597.90 393.20L604.10 393.20L610.80 392.70L610.80 413.30L616.50 416.40L621.90 418.40L624.20 420.60" fill="none" stroke="#ff0000" stroke-width="3.00" stroke-linecap="butt" stroke-linejoin="round"/>
<path d="M536.20 418.80L536.20 423.80" fill="none" stroke="#ff0000" stroke-width="1.50" stroke-linecap="butt" stroke-linejoin="round"/>
<path d="M547.60 417.20L547.60 420.50" fill="none" stroke="#ff0000" stroke-width="1.50" stroke-linecap="butt" stroke-linejoin="round"/>
<path d="M498.50 388.50 H623.50 V444.50 H498.50 Z" fill="none" stroke="#000" stroke-width="1"/>
<text x="466.50 474.50 482.50" y="394.10">300</text>
<text x="466.50 474.50 482.50" y="404.10">200</text>
<text x="466.50 474.50 482.50" y="414.10">100</text>
<text x="482.50" y="424.10">0</text>
<text x="461.50 466.50 474.50 482.50" y="434.10">-100</text>
<text x="461.50 466.50 474.50 482.50" y="444.10">-200</text>
<text x="496.10" y="465.50">0</text>
<text x="515.10 523.10 527.10" y="465.50">0.2</text>
<text x="540.10 548.10 552.10" y="465.50">0.4</text>
<text x="565.30 573.30 577.30" y="465.50">0.6</text>
<text x="590.30 598.30 602.30" y="465.50">0.8</text>
<text x="621.60" y="465.50">1</text>
<text x="533.00 543.00 551.00 556.00 564.00 572.00 577.00 581.00" y="367.00">Output 2</text>
</svg>
</body></html>
